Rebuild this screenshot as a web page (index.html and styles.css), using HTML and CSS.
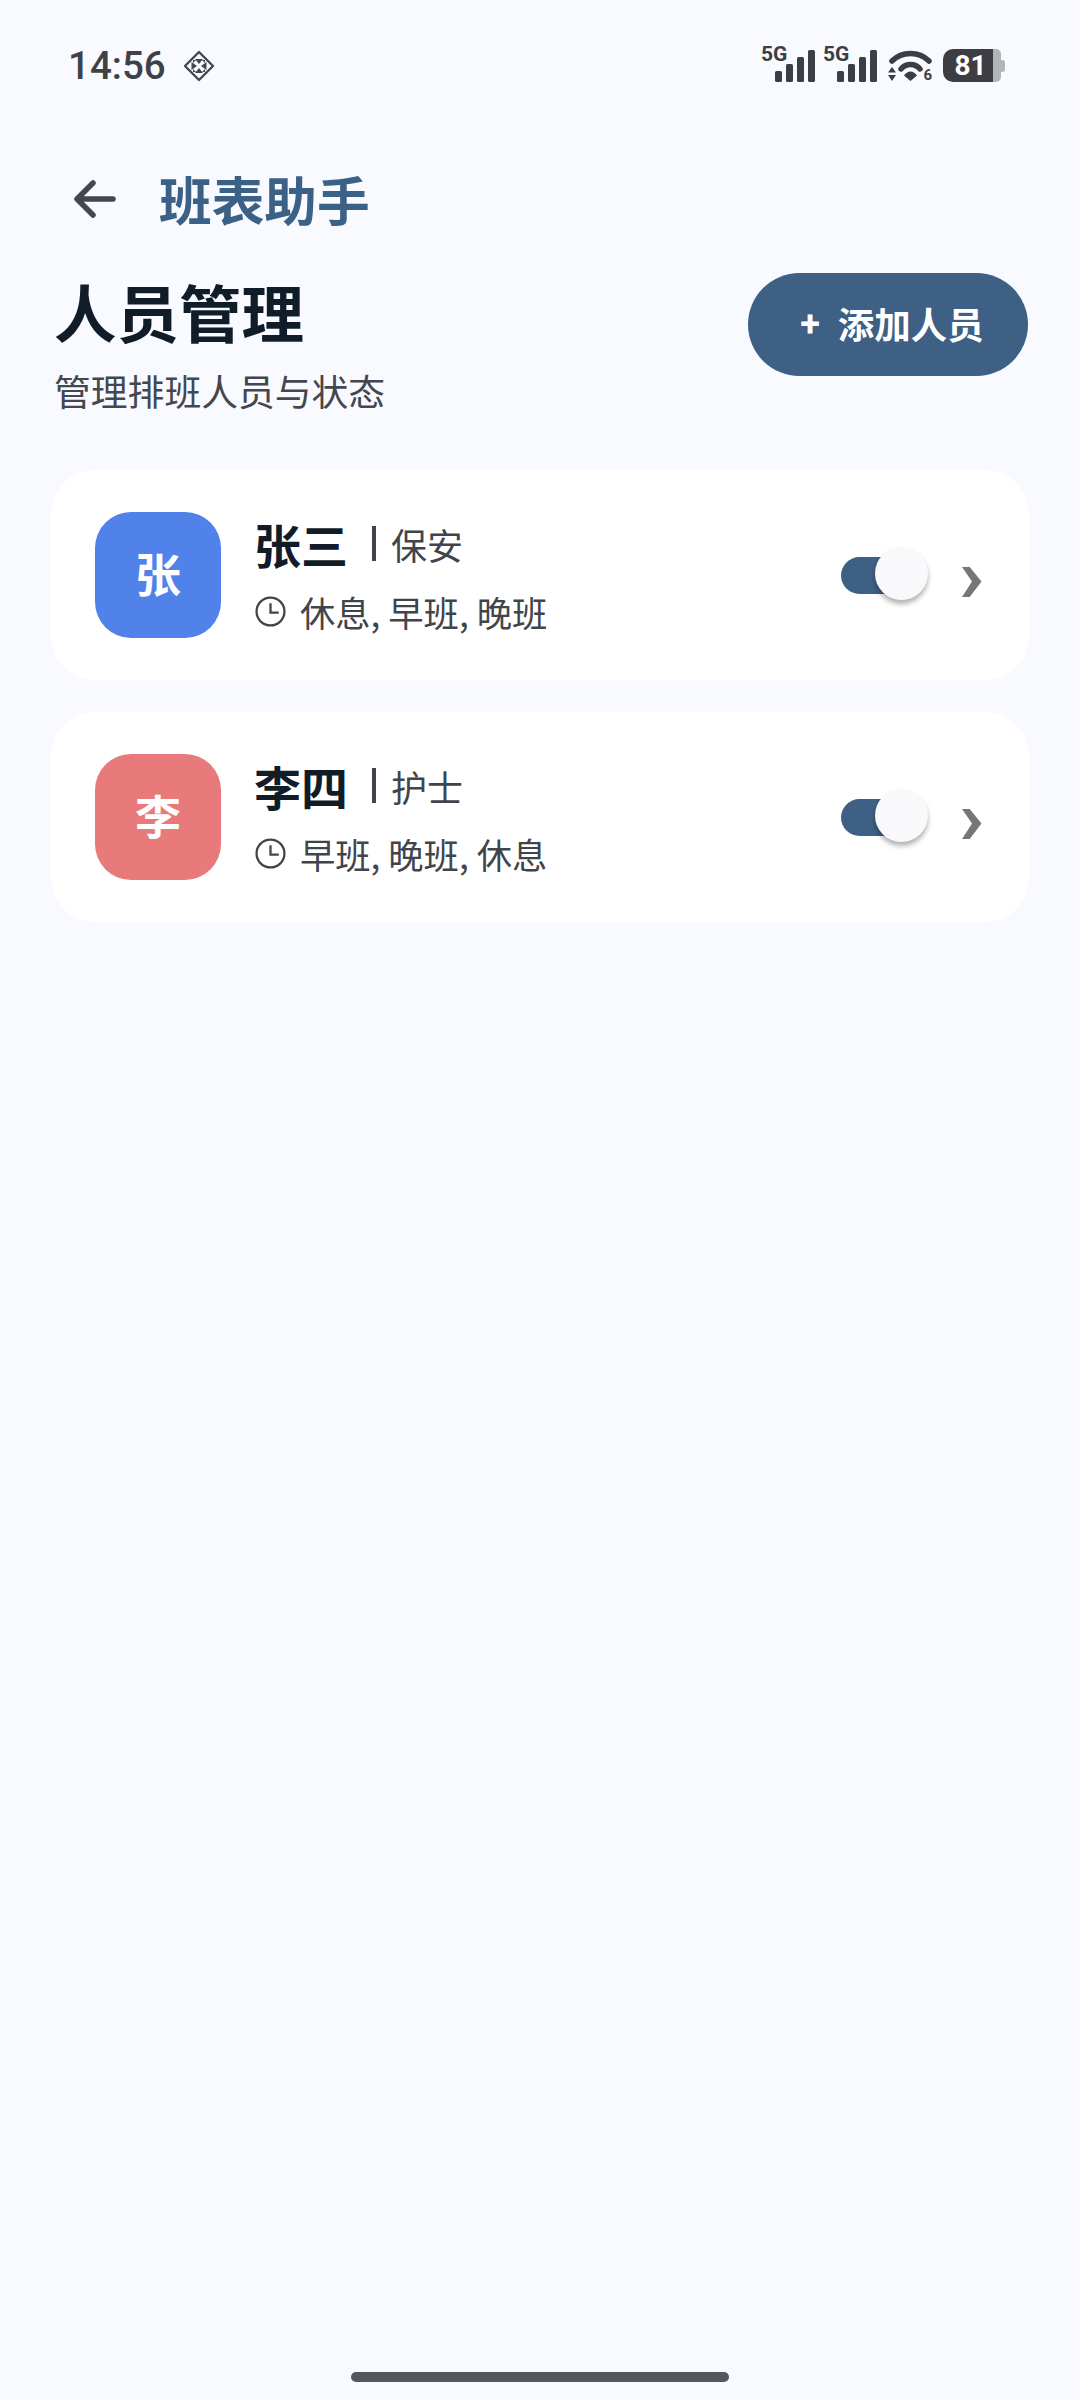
FILE: index.html
```html
<!DOCTYPE html>
<html lang="zh-CN">
<head>
<meta charset="utf-8">
<title>人员管理</title>
<link rel="stylesheet" href="styles.css">
</head>
<body>
<div class="screen">
  <div class="status">
    <div class="status-left">
      <span class="time">14:56</span>
      <svg class="nfc" width="32" height="32" viewBox="0 0 32 32"><path d="M16 2 30 16 16 30 2 16Z" fill="none" stroke="#45474c" stroke-width="2.400" stroke-linejoin="round"/><path d="M12 9H20L16 14ZM12 23H20L16 18ZM8.500 12V20L14 16ZM23.500 12V20L18 16ZM10 10H13L10 13ZM22 10V13L19 10ZM10 22V19L13 22ZM22 22H19L22 19Z" fill="#45474c"/></svg>
    </div>
    <div class="status-right">
      <div class="sig"><span class="g5">5G</span><svg width="40" height="32" viewBox="0 0 40 32"><rect x="0" y="21" width="7" height="11" rx="1.500" fill="#3c3e43"/><rect x="11" y="14" width="7" height="18" rx="1.500" fill="#3c3e43"/><rect x="22" y="7" width="7" height="25" rx="1.500" fill="#3c3e43"/><rect x="33" y="0" width="7" height="32" rx="1.500" fill="#3c3e43"/></svg></div>
      <div class="sig"><span class="g5">5G</span><svg width="40" height="32" viewBox="0 0 40 32"><rect x="0" y="21" width="7" height="11" rx="1.500" fill="#3c3e43"/><rect x="11" y="14" width="7" height="18" rx="1.500" fill="#3c3e43"/><rect x="22" y="7" width="7" height="25" rx="1.500" fill="#3c3e43"/><rect x="33" y="0" width="7" height="32" rx="1.500" fill="#3c3e43"/></svg></div>
      <div class="wifi"><svg width="45" height="32" viewBox="0 0 45 32"><path d="M4 11C14 1 31 1 41 11" fill="none" stroke="#3c3e43" stroke-width="5.500" stroke-linecap="round"/><path d="M13 19C18 13 27 13 32 19" fill="none" stroke="#3c3e43" stroke-width="5.500" stroke-linecap="round"/><path d="M16 25.500C20 20 25 20 29 25.500L22.500 31Z" fill="#3c3e43"/><path d="M0 22.500 4 17 8 22.500ZM0 25H8L4 31Z" fill="#3c3e43"/></svg><span class="wifi-six">6</span></div>
      <div class="batt"><span class="batt-fill">81</span><span class="batt-end"></span><span class="batt-nub"></span></div>
    </div>
  </div>

  <div class="appbar">
    <svg class="back" width="44" height="44" viewBox="0 0 44 44"><path d="M41 22H6M21 6 5 22 21 38" fill="none" stroke="#45474c" stroke-width="5.500" stroke-linecap="round" stroke-linejoin="round"/></svg>
    <span class="brand">班表助手</span>
  </div>

  <div class="head">
    <div class="head-text">
      <h1 class="title">人员管理</h1>
      <p class="sub">管理排班人员与状态</p>
    </div>
    <div class="add"><span class="plus">+</span><span>添加人员</span></div>
  </div>

  <div class="list">
    <div class="card">
      <div class="avatar av-blue">张</div>
      <div class="info">
        <div class="name-row"><span class="name">张三</span><span class="bar"></span><span class="job">保安</span></div>
        <div class="shift-row">
          <svg class="clock" width="31" height="31" viewBox="0 0 30 30"><circle cx="15" cy="15" r="13.500" fill="none" stroke="#41454b" stroke-width="2.200"/><path d="M15 7V16H23" fill="none" stroke="#41454b" stroke-width="2.200"/></svg>
          <span class="shift">休息, 早班, 晚班</span>
        </div>
      </div>
      <div class="toggle"><span class="knob"></span></div>
      <svg class="chev" width="20" height="30" viewBox="0 0 20 30"><path d="M0 0H7.700L19.500 14.500 7.700 30H0L10 14.500Z" fill="#757679"/></svg>
    </div>
    <div class="card">
      <div class="avatar av-red">李</div>
      <div class="info">
        <div class="name-row"><span class="name">李四</span><span class="bar"></span><span class="job">护士</span></div>
        <div class="shift-row">
          <svg class="clock" width="31" height="31" viewBox="0 0 30 30"><circle cx="15" cy="15" r="13.500" fill="none" stroke="#41454b" stroke-width="2.200"/><path d="M15 7V16H23" fill="none" stroke="#41454b" stroke-width="2.200"/></svg>
          <span class="shift">早班, 晚班, 休息</span>
        </div>
      </div>
      <div class="toggle"><span class="knob"></span></div>
      <svg class="chev" width="20" height="30" viewBox="0 0 20 30"><path d="M0 0H7.700L19.500 14.500 7.700 30H0L10 14.500Z" fill="#757679"/></svg>
    </div>
  </div>

  <div class="spacer"></div>
  <div class="home"><span class="home-bar"></span></div>
</div>
</body>
</html>
```
FILE: styles.css
```css
* { box-sizing: border-box; }
html, body { margin: 0; padding: 0; }
body { background: #f8faff; font-family: "Noto Sans CJK SC", "Noto Sans", sans-serif; }
.screen { width: 1080px; height: 2400px; display: flex; flex-direction: column; }
.status { height: 66px; margin-top: 32px; padding: 0 75px 0 68px; display: flex; justify-content: space-between; align-items: center; }
.status-left { display: flex; align-items: center; gap: 17px; margin-top: 1px; }
.time { font: 500 38.500px/44px Roboto, sans-serif; color: #3f4146; }
.status-right { display: flex; align-items: flex-end; height: 35px; margin-bottom: 1px; }
.sig { position: relative; width: 54px; height: 35px; margin-right: 8px; display: flex; justify-content: flex-end; align-items: flex-end; }
.sig + .sig { margin-right: 11px; }
.g5 { position: absolute; left: 0; top: -1px; font: 700 21px/17px Roboto, sans-serif; color: #3c3e43; }
.wifi { position: relative; width: 45px; height: 32px; }
.wifi svg { display: block; }
.wifi-six { position: absolute; right: 1px; bottom: 0; font: 700 15px/13px Roboto, sans-serif; color: #3c3e43; }
.batt { display: flex; align-items: center; margin-left: 10px; }
.batt-fill { width: 50px; height: 33px; padding-left: 5px; background: #3c3e43; border-radius: 10px 0 0 10px; color: #fff; font: 700 28px/33px Roboto, sans-serif; text-align: center; }
.batt-end { width: 8px; height: 33px; background: #b4b5b8; border-radius: 0 5px 5px 0; }
.batt-nub { width: 4px; height: 12px; background: #b4b5b8; border-radius: 0 3px 3px 0; }
.appbar { margin-top: 68px; padding-left: 72px; display: flex; align-items: center; gap: 43px; height: 66px; }
.brand { font-size: 52.700px; line-height: 64px; font-weight: 700; color: #3c6186; margin-bottom: 2px; }
.head { margin-top: 41px; padding: 0 52px 0 54px; display: flex; justify-content: space-between; align-items: flex-start; }
.title { margin: -3px 0 0; font-size: 62.500px; line-height: 82px; font-weight: 700; color: #101c28; }
.sub { margin: 14px 0 1px; font-size: 36.800px; line-height: 48px; font-weight: 400; color: #44474e; }
.add { width: 280px; height: 103px; padding: 0 0 2px 8px; border-radius: 52px; background: #3e6085; color: #fff; font-size: 36.500px; font-weight: 700; display: flex; align-items: center; justify-content: center; gap: 18px; }
.plus { font: 700 36px/40px Roboto, sans-serif; }
.list { margin-top: 55px; padding: 0 51px; display: flex; flex-direction: column; gap: 32px; }
.card { height: 210px; background: #fff; border-radius: 44px; padding: 0 47px 0 44px; display: flex; align-items: center; }
.avatar { width: 126px; height: 126px; padding-bottom: 6px; border-radius: 36px; color: #fff; font-size: 46px; font-weight: 700; display: flex; align-items: center; justify-content: center; }
.av-blue { background: #5082ea; }
.av-red { background: #e87a7c; }
.info { margin-left: 33px; padding-bottom: 5px; flex: 1; display: flex; flex-direction: column; gap: 14px; }
.name-row { display: flex; align-items: center; height: 64px; }
.name { font-size: 47px; font-weight: 700; line-height: 64px; color: #101c28; }
.bar { width: 4px; height: 35px; background: #41454b; margin-left: 24px; margin-right: 15px; }
.job { font-size: 36px; line-height: 48px; color: #41454b; }
.shift-row { display: flex; align-items: center; gap: 14px; height: 44px; }
.clock { margin-left: 1px; }
.shift { font-size: 35.300px; line-height: 44px; color: #41454b; }
.toggle { position: relative; width: 76px; height: 37px; border-radius: 19px; background: #3e6085; margin-right: 45px; }
.knob { position: absolute; left: 34px; top: -10px; width: 53px; height: 53px; border-radius: 50%; background: #f9f9fb; box-shadow: 0 4px 5px rgba(0,0,0,.3); }
.chev { margin-top: 14px; }
.spacer { flex: 1; }
.home { height: 28px; display: flex; justify-content: center; }
.home-bar { width: 378px; height: 10px; border-radius: 5px; background: #55575c; }
```
